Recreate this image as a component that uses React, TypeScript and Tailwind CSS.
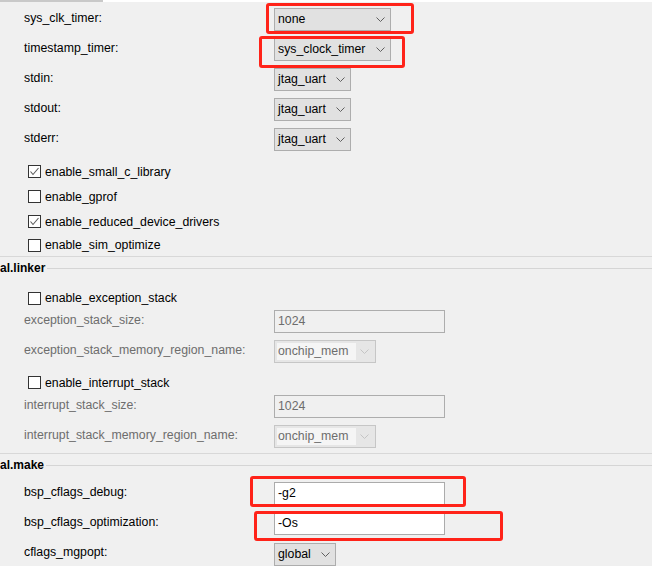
import type { ReactNode } from 'react';

const font = { fontFamily: '"Liberation Sans", Arial, sans-serif' };

function Chevron({ disabled }: { disabled?: boolean }) {
  return (
    <svg width="9" height="5" viewBox="0 0 9 5" className="shrink-0">
      <path d="M0.5 0.5 L4.5 4.5 L8.5 0.5" fill="none" stroke={disabled ? '#c4c4c4' : '#5f5f5f'} strokeWidth="1" />
    </svg>
  );
}

function Select({ value, width }: { value: string; width: string }) {
  return (
    <div className={`flex h-[23px] ${width} items-center justify-between border border-[#adadad] bg-[#e1e1e1] pl-[3px] pr-[5px] text-black`}>
      <span>{value}</span>
      <Chevron />
    </div>
  );
}

function DisabledSelect({ value }: { value: string }) {
  return (
    <div className="flex h-[23px] w-[102px] items-center border border-[#c6c6c6] bg-[#e6e6e6] p-[2px]">
      <span className="flex h-full w-[79px] items-center bg-[#f5f5f5] pl-[1px] text-[#6d6d6d]">{value}</span>
      <span className="flex flex-1 justify-center">
        <Chevron disabled />
      </span>
    </div>
  );
}

function Input({ value, disabled }: { value: string; disabled?: boolean }) {
  return (
    <div
      className={`flex h-[23px] w-[171px] items-center border pl-[3px] ${
        disabled ? 'border-[#adadad] bg-[#f0f0f0] text-[#6d6d6d]' : 'border-[#ababab] bg-white text-black'
      }`}
    >
      {value}
    </div>
  );
}

function Mark({ className }: { className: string }) {
  return <div className={`pointer-events-none absolute rounded-[3px] border-[3px] border-[#ff2319] ${className}`} />;
}

function Row({ label, children, disabled, height = 'h-[30px]', mark }: { label: string; children: ReactNode; disabled?: boolean; height?: string; mark?: string }) {
  return (
    <div className={`flex ${height}`}>
      <div className={`w-[274px] shrink-0 pl-6 pt-[2px] leading-4 ${disabled ? 'text-[#6d6d6d]' : 'text-black'}`}>{label}</div>
      <div className="relative self-start">
        {children}
        {mark && <Mark className={mark} />}
      </div>
    </div>
  );
}

function Check({ label, checked, height = 'h-[25px]' }: { label: string; checked?: boolean; height?: string }) {
  return (
    <div className={`flex ${height} items-center gap-[4px] pl-[28px] text-black`}>
      <div className="h-[13px] w-[13px] border border-[#333333] bg-white">
        {checked && (
          <svg width="11" height="11" viewBox="0 0 11 11">
            <path d="M1.5 5.5 L4 8.5 L9.5 2" fill="none" stroke="#5c5c5c" strokeWidth="1.1" />
          </svg>
        )}
      </div>
      <span className="leading-4">{label}</span>
    </div>
  );
}

function Header({ title }: { title: string }) {
  return (
    <>
      <div className="h-px bg-[#d8d8d8]" />
      <div className="flex h-[22px] items-center">
        <span className="text-[12px] font-bold text-black">{title}</span>
        <div className="ml-[2px] h-px flex-1 bg-[#d5d5d5]" />
      </div>
    </>
  );
}

export default function App() {
  return (
    <div className="h-[566px] w-[652px] overflow-hidden bg-[#f0f0f0] text-[12.3px]" style={font}>
      <div className="flex h-[2px] bg-white">
        <div className="w-[103px] bg-[#c9c9c9]" />
      </div>

      <div className="pt-[6px]">
        <Row label="sys_clk_timer:" mark="left-[-8px] right-[-23px] top-[-5px] bottom-[-3px]">
          <Select value="none" width="w-[117px]" />
        </Row>
        <Row label="timestamp_timer:" mark="left-[-15px] right-[-14px] top-[-2px] bottom-[-7px]">
          <Select value="sys_clock_timer" width="w-[117px]" />
        </Row>
        <Row label="stdin:">
          <Select value="jtag_uart" width="w-[77px]" />
        </Row>
        <Row label="stdout:">
          <Select value="jtag_uart" width="w-[77px]" />
        </Row>
        <Row label="stderr:" height="h-[31px]">
          <Select value="jtag_uart" width="w-[77px]" />
        </Row>

        <Check label="enable_small_c_library" checked />
        <Check label="enable_gprof" />
        <Check label="enable_reduced_device_drivers" checked />
        <Check label="enable_sim_optimize" height="h-[22px]" />
      </div>

      <Header title="al.linker" />
      <Check label="enable_exception_stack" height="h-[31px] pt-[7px]" />
      <Row label="exception_stack_size:" disabled>
        <Input value="1024" disabled />
      </Row>
      <Row label="exception_stack_memory_region_name:" disabled>
        <DisabledSelect value="onchip_mem" />
      </Row>
      <Check label="enable_interrupt_stack" />
      <Row label="interrupt_stack_size:" disabled>
        <Input value="1024" disabled />
      </Row>
      <Row label="interrupt_stack_memory_region_name:" disabled height="h-[28px]">
        <DisabledSelect value="onchip_mem" />
      </Row>

      <Header title="al.make" />
      <div className="pt-[6px]">
        <Row label="bsp_cflags_debug:" mark="left-[-24px] right-[-21px] top-[-6px] bottom-[-2px]">
          <Input value="-g2" />
        </Row>
        <Row label="bsp_cflags_optimization:" mark="left-[-20px] right-[-58px] top-[-1px] bottom-[-6px]">
          <Input value="-Os" />
        </Row>
        <Row label="cflags_mgpopt:">
          <div className="pt-px">
            <Select value="global" width="w-[62px]" />
          </div>
        </Row>
      </div>
    </div>
  );
}
